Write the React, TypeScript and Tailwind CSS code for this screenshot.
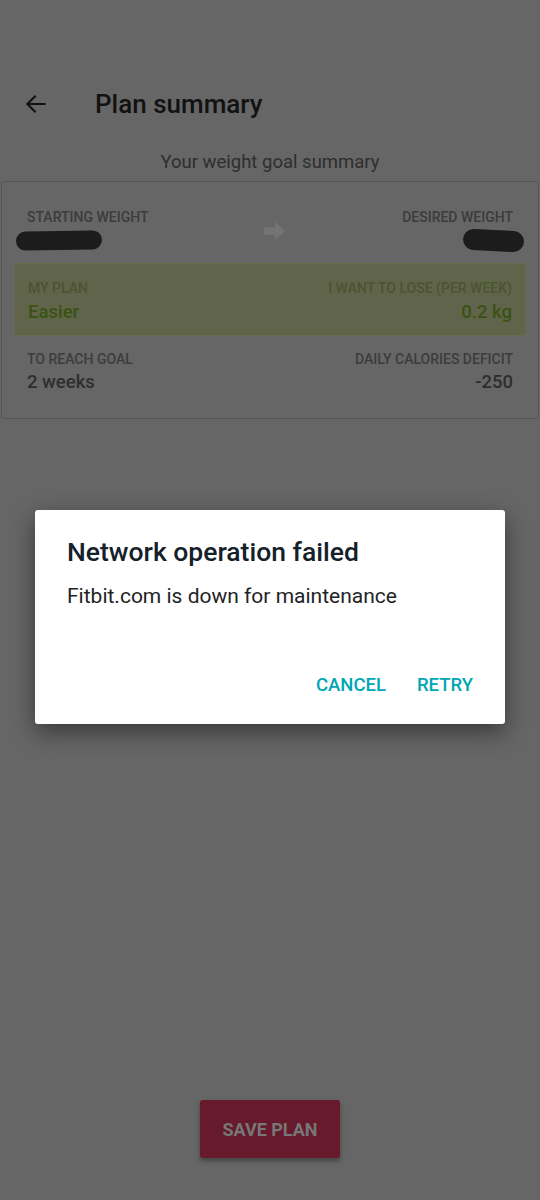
import React from "react";

function BackArrow() {
  return (
    <svg width="26" height="26" viewBox="0 0 24 24" fill="none">
      <path
        d="M20 12H4.5M11 5l-7 7 7 7"
        stroke="#111111"
        strokeWidth="2"
        strokeLinecap="square"
      />
    </svg>
  );
}

function RightArrow() {
  return (
    <svg width="22" height="20" viewBox="0 0 22 20">
      <path d="M0 6.5h11V1l10 9-10 9v-5.5H0z" fill="#747474" />
    </svg>
  );
}

export default function App() {
  return (
    <div
      className="relative min-h-[1200px] w-[540px] bg-[#666666] flex flex-col"
      style={{ fontFamily: "Roboto, 'Liberation Sans', sans-serif" }}
    >
      {/* toolbar */}
      <div className="flex items-center h-[56px] mt-[76px] pl-[23px]">
        <BackArrow />
        <h1 className="ml-[46px] text-[26px] font-medium text-[#121212]">
          Plan summary
        </h1>
      </div>

      <p className="mt-[18px] text-center text-[18.5px] text-[#2e2e2e] leading-[24px]">
        Your weight goal summary
      </p>

      {/* summary card */}
      <div className="mt-[7px] mx-[1px] border border-[#575757] rounded-[3px] pt-[26px] pb-[24px]">
        <div className="flex justify-between items-start px-[25px]">
          <div>
            <div className="text-[14px] font-medium text-[#3c3c3c] leading-[18px]">
              STARTING WEIGHT
            </div>
            <div className="-ml-[11px] mt-[5px] h-[19px] w-[86px] rounded-full bg-[#1c1c1c] -rotate-1" />
          </div>
          <div className="mt-[13px]">
            <RightArrow />
          </div>
          <div className="flex flex-col items-end">
            <div className="text-[14px] font-medium text-[#3c3c3c] leading-[18px]">
              DESIRED WEIGHT
            </div>
            <div className="-mr-[11px] mt-[4px] h-[21px] w-[61px] rounded-full bg-[#1c1c1c] rotate-3" />
          </div>
        </div>

        <div className="mx-[12px] mt-[12px] border border-[#676d4b] bg-[#60644b] px-[13px] pt-[15px] pb-[11px] flex justify-between">
          <div>
            <div className="text-[14px] font-medium text-[#4b5530] leading-[18px]">MY PLAN</div>
            <div className="mt-[3px] text-[18.5px] font-medium text-[#3a5212] leading-[24px]">Easier</div>
          </div>
          <div className="text-right">
            <div className="text-[14px] font-medium text-[#4b5530] leading-[18px]">
              I WANT TO LOSE (PER WEEK)
            </div>
            <div className="mt-[3px] text-[18.5px] font-medium text-[#3a5212] leading-[24px]">0.2 kg</div>
          </div>
        </div>

        <div className="mt-[14px] px-[25px] flex justify-between">
          <div>
            <div className="text-[14px] font-medium text-[#3c3c3c] leading-[18px]">TO REACH GOAL</div>
            <div className="mt-[2px] text-[18.5px] font-medium text-[#2e2e2e] leading-[24px]">2 weeks</div>
          </div>
          <div className="text-right">
            <div className="text-[14px] font-medium text-[#3c3c3c] leading-[18px]">
              DAILY CALORIES DEFICIT
            </div>
            <div className="mt-[2px] text-[18.5px] font-medium text-[#2e2e2e] leading-[24px]">-250</div>
          </div>
        </div>
      </div>

      {/* save button */}
      <div className="mt-auto mb-[42px] flex justify-center">
        <button className="w-[140px] h-[58px] rounded-[3px] bg-[#661a2c] text-[18px] font-bold text-[#777777] shadow-[0_3px_5px_rgba(0,0,0,0.35)]">
          SAVE PLAN
        </button>
      </div>

      {/* dialog */}
      <div className="absolute inset-0 flex justify-center items-start pt-[510px]">
        <div className="w-[470px] h-[214px] bg-white rounded-[3px] shadow-[0_8px_24px_rgba(0,0,0,0.45)] flex flex-col px-[32px]">
          <h2 className="mt-[25px] text-[26.5px] font-medium text-[#14202a] leading-[34px]">
            Network operation failed
          </h2>
          <p className="mt-[14px] text-[21px] text-[#1f2326] leading-[26px]">
            Fitbit.com is down for maintenance
          </p>
          <div className="mt-auto mb-[24px] flex justify-end gap-[31px]">
            <button className="text-[18.5px] font-medium text-[#00a6b4]">CANCEL</button>
            <button className="text-[18.5px] font-medium text-[#00a6b4]">RETRY</button>
          </div>
        </div>
      </div>
    </div>
  );
}
